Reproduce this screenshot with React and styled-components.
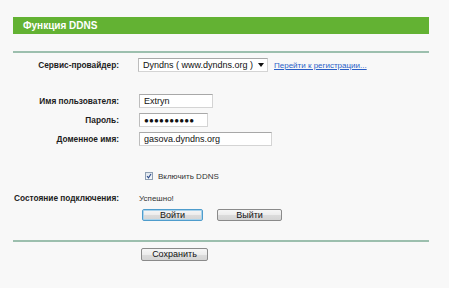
import React from "react";
import styled, { createGlobalStyle } from "styled-components";

const Global = createGlobalStyle`
  html, body { margin: 0; padding: 0; background: #f8f8f8; }
  body { font-family: "Liberation Sans", Arial, sans-serif; color: #222; }
`;

const Page = styled.div`
  width: 416px;
  padding: 17px 20px 0 13px;
`;

const Header = styled.div`
  height: 17px;
  background: #63b233;
  display: flex;
  align-items: center;
  padding-left: 10px;
  color: #fff;
  font-weight: bold;
  font-size: 10px;
`;

const Divider = styled.div`
  height: 2px;
  background: #9cbfae;
  margin-top: ${(p) => p.$mt}px;
`;

const Row = styled.div`
  display: flex;
  align-items: center;
  height: ${(p) => p.$h || 14}px;
  margin-top: ${(p) => p.$mt}px;
`;

const Label = styled.div`
  width: 106px;
  margin-right: 20px;
  text-align: right;
  font-weight: bold;
  font-size: 8.3px;
  color: #1c1c1c;
  white-space: nowrap;
`;

const Field = styled.div`
  box-sizing: border-box;
  width: ${(p) => p.$w}px;
  height: 14px;
  background: #fff;
  border: 1px solid #d4d4d4;
  border-top-color: #a8a8a8;
  border-left-color: #bdbdbd;
  display: flex;
  align-items: center;
  padding-left: 4px;
  font-size: 9px;
  color: #111;
  white-space: nowrap;
  margin-left: ${(p) => p.$ml || 0}px;
`;

const Dots = styled.span`
  font-size: 8px;
  letter-spacing: 0.2px;
  font-weight: bold;
`;

const SelectBox = styled(Field)`
  justify-content: space-between;
  padding-right: 3px;
  margin-left: -1px;
`;

const Arrow = styled.span`
  width: 0;
  height: 0;
  border-left: 3px solid transparent;
  border-right: 3px solid transparent;
  border-top: 4px solid #111;
`;

const Link = styled.a`
  margin-left: 6px;
  font-size: 8px;
  color: #2a5fc7;
  text-decoration: underline;
  white-space: nowrap;
`;

const Check = styled.span`
  box-sizing: border-box;
  width: 8px;
  height: 8px;
  margin-left: 6px;
  border: 1px solid #8e9fb3;
  background: linear-gradient(#dfe6ee, #f6f8fa);
  display: flex;
  align-items: center;
  justify-content: center;
`;

const Small = styled.span`
  font-size: 8px;
  color: #333;
  margin-left: ${(p) => p.$ml || 0}px;
  white-space: nowrap;
`;

const Button = styled.button`
  box-sizing: border-box;
  width: ${(p) => p.$w}px;
  height: ${(p) => p.$h || 12}px;
  margin-left: ${(p) => p.$ml || 0}px;
  padding: 0;
  border-radius: 2px;
  border: 1px solid ${(p) => (p.$focus ? "#4e9ccc" : "#8a8a8a")};
  box-shadow: ${(p) => (p.$focus ? "0 0 0 1px #a9d3ec inset" : "none")};
  background: linear-gradient(#f6f6f6 0%, #ececec 50%, #dcdcdc 51%, #d4d4d4 100%);
  font-family: "Liberation Sans", Arial, sans-serif;
  font-size: 9px;
  color: #111;
  line-height: 1;
`;

export default function App() {
  return (
    <>
      <Global />
      <Page>
        <Header>Функция DDNS</Header>
        <Divider $mt={17} />
        <Row $mt={5}>
          <Label>Сервис-провайдер:</Label>
          <SelectBox $w={130}>
            <span>Dyndns ( www.dyndns.org )</span>
            <Arrow />
          </SelectBox>
          <Link>Перейти к регистрации...</Link>
        </Row>
        <Row $mt={22}>
          <Label>Имя пользователя:</Label>
          <Field $w={74}>Extryn</Field>
        </Row>
        <Row $mt={5}>
          <Label>Пароль:</Label>
          <Field $w={69}>
            <Dots>●●●●●●●●●●</Dots>
          </Field>
        </Row>
        <Row $mt={5}>
          <Label>Доменное имя:</Label>
          <Field $w={133}>gasova.dyndns.org</Field>
        </Row>
        <Row $mt={24} $h={12}>
          <Label />
          <Check>
            <svg width="6" height="6" viewBox="0 0 6 6">
              <path d="M1 3.2 L2.5 4.8 L5 1" fill="none" stroke="#2b4a8a" strokeWidth="1.1" />
            </svg>
          </Check>
          <Small $ml={5}>Включить DDNS</Small>
        </Row>
        <Row $mt={10} $h={12}>
          <Label>Состояние подключения:</Label>
          <Small>Успешно!</Small>
        </Row>
        <Row $mt={5} $h={12}>
          <Label />
          <Button $w={61} $ml={3} $focus>Войти</Button>
          <Button $w={65} $ml={14}>Выйти</Button>
        </Row>
        <Divider $mt={19} />
        <Row $mt={6} $h={13}>
          <Label />
          <Button $w={67} $h={13} $ml={2}>Сохранить</Button>
        </Row>
      </Page>
    </>
  );
}
